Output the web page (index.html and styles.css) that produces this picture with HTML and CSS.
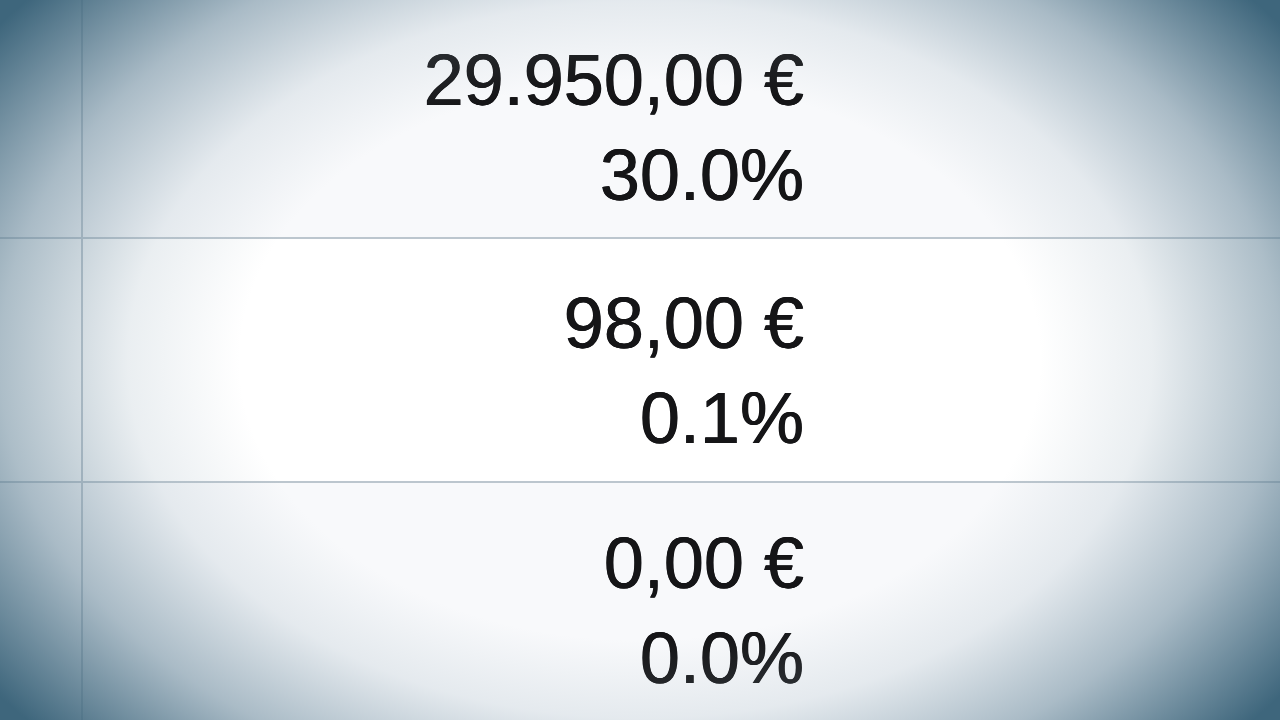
FILE: index.html
```html
<!DOCTYPE html>
<html lang="de">
<head>
<meta charset="utf-8">
<title>Beträge</title>
<link rel="stylesheet" href="styles.css">
</head>
<body>
<div class="screen">
  <div class="table">
    <div class="row row-first">
      <div class="cell-left"></div>
      <div class="cell-value">
        <div class="amount">29.950,00 €</div>
        <div class="percent">30.0%</div>
      </div>
    </div>
    <div class="row row-mid">
      <div class="cell-left"></div>
      <div class="cell-value">
        <div class="amount">98,00 €</div>
        <div class="percent">0.1%</div>
      </div>
    </div>
    <div class="row row-last">
      <div class="cell-left"></div>
      <div class="cell-value">
        <div class="amount">0,00 €</div>
        <div class="percent">0.0%</div>
      </div>
    </div>
  </div>
  <div class="vignette"></div>
</div>
</body>
</html>
```

FILE: styles.css
```css
html, body {
  margin: 0;
  padding: 0;
  width: 1280px;
  height: 720px;
  overflow: hidden;
  background: #ffffff;
}

.screen {
  position: relative;
  width: 1280px;
  height: 720px;
  overflow: hidden;
  background: #f8f9fb;
}

.table {
  display: flex;
  flex-direction: column;
  filter: blur(0.6px);
}

.row {
  display: grid;
  grid-template-columns: 83px 1fr;
  border-bottom: 2px solid #bcc6ce;
  box-sizing: border-box;
}

.row-first {
  height: 239px;
}

.row-mid {
  height: 244px;
  background: #ffffff;
}

.row-last {
  height: 250px;
  border-bottom: none;
}

.cell-left {
  border-right: 2px solid #bcc6ce;
}

.cell-value {
  display: flex;
  flex-direction: column;
  align-items: flex-end;
  padding-right: 476px;
  font-family: "Liberation Sans", Arial, sans-serif;
  font-size: 72px;
  line-height: 95px;
  color: #151517;
  text-shadow: 0.4px 0 0 #151517, -0.4px 0 0 #151517;
}

.row-first .cell-value {
  padding-top: 33px;
}

.row-mid .cell-value {
  padding-top: 37px;
}

.row-last .cell-value {
  padding-top: 33px;
}

.amount, .percent {
  white-space: nowrap;
}

.vignette {
  position: absolute;
  inset: 0;
  pointer-events: none;
  background:
    radial-gradient(ellipse 800px 560px at 640px 360px,
      rgba(255,255,255,0) 0%,
      rgba(255,255,255,0) 50%,
      rgba(150,172,186,0.2) 64%,
      rgba(105,136,155,0.55) 80%,
      rgba(62,102,124,1) 100%);
}
```
